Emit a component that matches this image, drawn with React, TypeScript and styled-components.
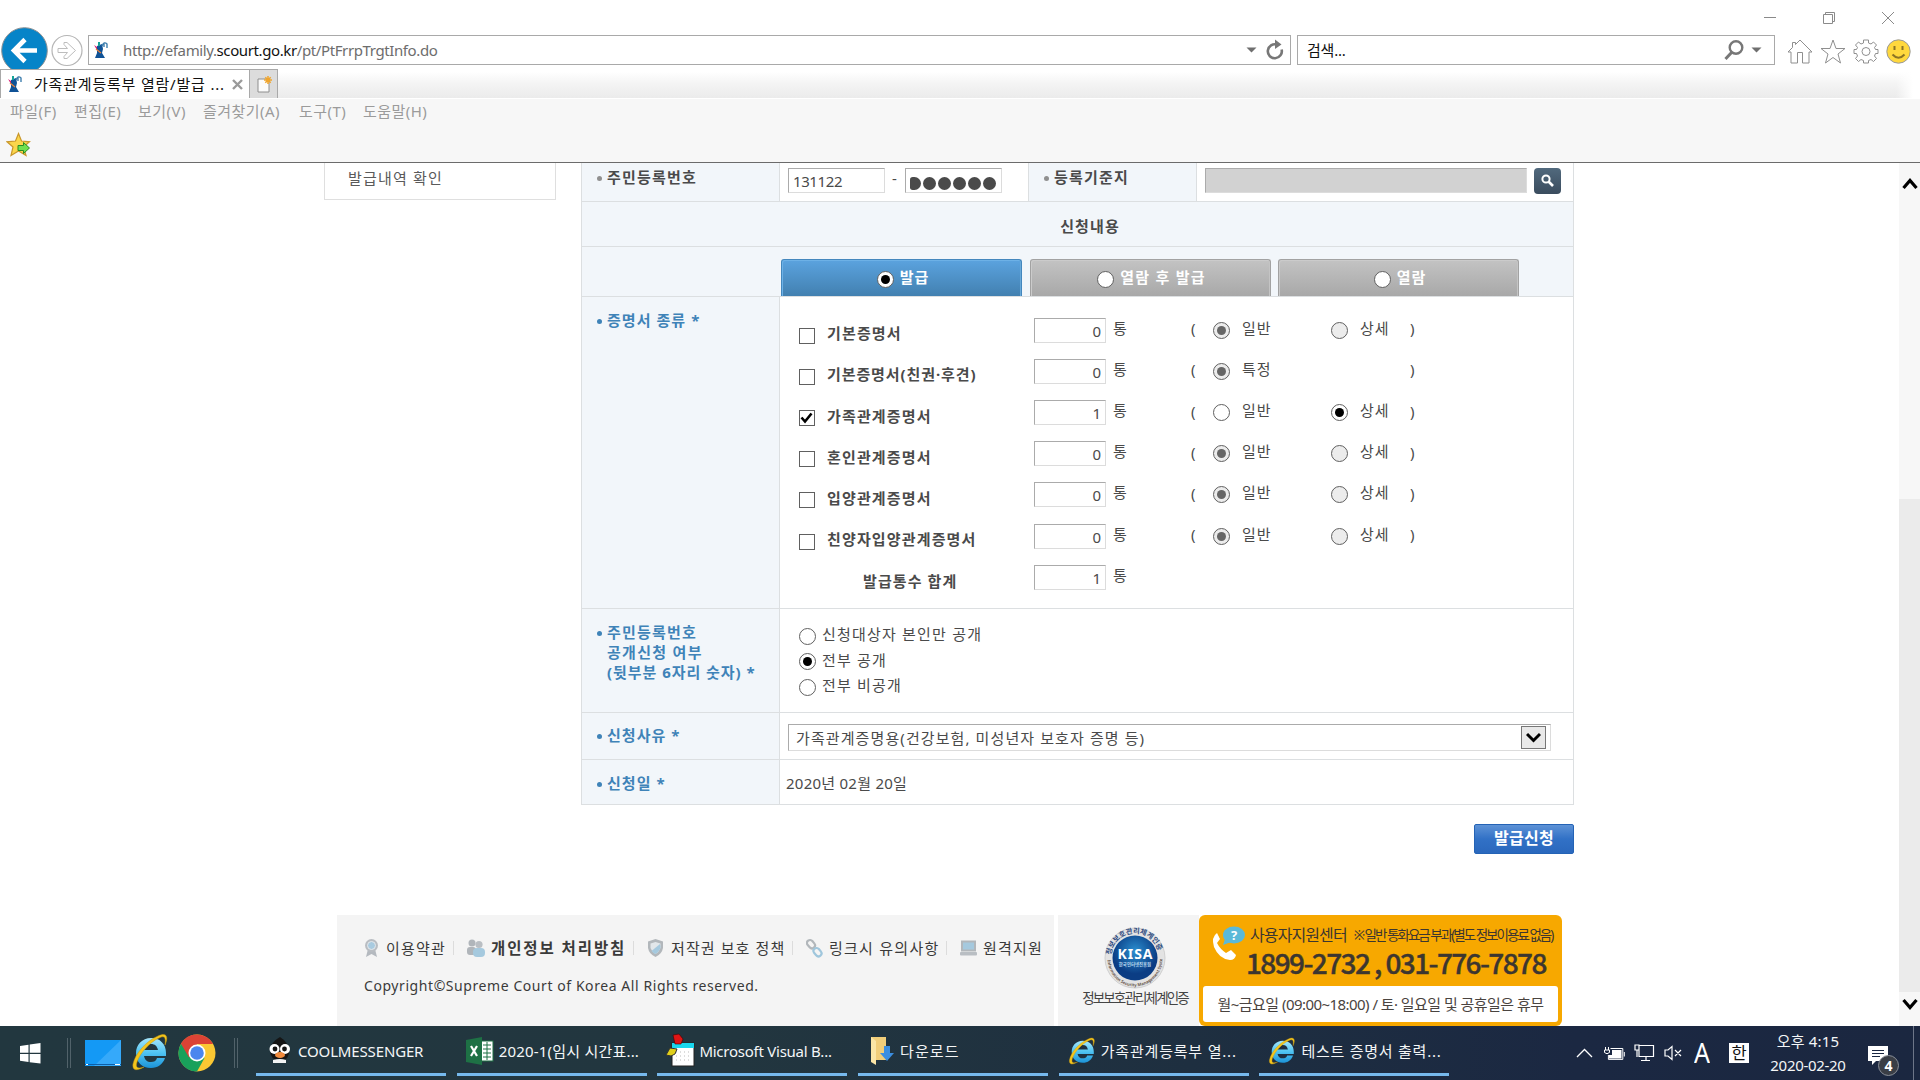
import React from "react";
import styled, { createGlobalStyle, css } from "styled-components";

const Global = createGlobalStyle`
  * { box-sizing: border-box; }
  html, body { margin: 0; padding: 0; }
  body {
    width: 1920px; height: 1080px; overflow: hidden; background: #fff;
    font-family: "Noto Sans", "Noto Sans CJK KR", sans-serif;
    font-size: 15px; color: #4a4a4a;
  }
  svg { display: block; flex: none; }
`;

const T = styled.span<{ $s?: number; $ls?: number; $c?: string; $b?: boolean; $ml?: number; $up?: number; $w?: number }>`
  display: block;
  flex: none;
  white-space: pre;
  line-height: 20px;
  font-size: ${(p) => p.$s ?? 15}px;
  letter-spacing: ${(p) => p.$ls ?? 0}px;
  color: ${(p) => p.$c ?? "inherit"};
  font-weight: ${(p) => (p.$b ? 700 : 400)};
  margin-left: ${(p) => p.$ml ?? 0}px;
  margin-bottom: ${(p) => p.$up ?? 0}px;
  ${(p) => p.$w && css`width: ${p.$w}px;`}
`;

const Screen = styled.div`
  width: 1920px; height: 1080px; display: flex; flex-direction: column; overflow: hidden;
`;

/* ---------- browser chrome ---------- */
const TitleBar = styled.div`
  height: 27px; flex: none; display: flex; justify-content: flex-end; padding: 11px 25px 0 0; gap: 45px;
`;
const NavBar = styled.div`
  height: 42px; flex: none; display: flex; align-items: flex-start; padding-left: 1px;
`;
const NavButton = styled.div<{ $ml?: number; $mt?: number }>`
  margin-left: ${(p) => p.$ml ?? 0}px; margin-top: ${(p) => p.$mt ?? 0}px; flex: none;
`;
const Field = styled.div<{ $w: number; $ml: number }>`
  width: ${(p) => p.$w}px; margin-left: ${(p) => p.$ml}px; margin-top: 8px; height: 30px; flex: none;
  border: 1px solid #a9a9a9; background: #fff; display: flex; align-items: center;
`;
const Grow = styled.div`flex: 1;`;
const UrlHost = styled.b`font-weight: 400; color: #111;`;
const ToolIcons = styled.div`display: flex; gap: 7px; margin: 12px 0 0 12px;`;
const TabStrip = styled.div`
  height: 30px; flex: none; display: flex; position: relative;
  background: linear-gradient(#fff 10%, #f4f4f4 50%, #ebebeb); border-bottom: 1px solid #fff;
`;
const StripFade = styled.div`
  margin-left: auto; width: 24px; background: linear-gradient(90deg, rgba(255,255,255,0), #fff 70%);
`;
const Tab = styled.div`
  width: 250px; height: 29px; background: #fff; border: 1px solid #a9a9a9; border-bottom: 0;
  display: flex; align-items: center; padding-left: 6px;
`;
const NewTab = styled.div`
  width: 28px; height: 29px; background: #dcdcdc; border: 1px solid #a9a9a9; border-left: 0; border-bottom: 0;
  padding: 5px 0 0 6px;
`;
const MenuArea = styled.div`height: 64px; flex: none; background: #f7f7f7; border-bottom: 1px solid #6b6b6b;`;
const MenuRow = styled.div`height: 27px; display: flex; align-items: center; padding: 0 0 3px 10px; color: #9b9b9b;`;
const FavRow = styled.div`padding: 6px 0 0 6px;`;

/* ---------- page ---------- */
const Viewport = styled.div`height: 863px; flex: none; display: flex; overflow: hidden;`;
const Page = styled.div`width: 1899px; flex: none; display: flex; flex-direction: column;`;
const Body = styled.div`display: flex; align-items: flex-start; height: 752px; flex: none; padding-left: 324px;`;
const SideItem = styled.div`
  width: 232px; height: 37px; border: 1px solid #dfdfdf; border-top: 0; display: flex; align-items: center; padding: 0 0 6px 23px; color: #5a5a5a;
`;
const Main = styled.div`width: 993px; margin-left: 25px;`;
const Table = styled.div`border: 1px solid #dcdfe1; border-top: 0;`;
const Row = styled.div<{ $h: number; $last?: boolean }>`
  display: flex; height: ${(p) => p.$h}px; ${(p) => !p.$last && css`border-bottom: 1px solid #dcdfe1;`}
`;
const HeadCell = styled.div<{ $w: number; $pt?: number; $blue?: boolean }>`
  width: ${(p) => p.$w}px; flex: none; background: #f2f6fa; border-right: 1px solid #dcdfe1;
  padding: ${(p) => p.$pt ?? 0}px 0 0 15px; display: flex; align-items: flex-start;
  color: ${(p) => (p.$blue ? "#3f83b8" : "#4a4a4a")};
`;
const Bullet = styled.i<{ $c: string }>`
  width: 5px; height: 5px; border-radius: 50%; background: ${(p) => p.$c}; margin: 9px 5px 0 0; flex: none;
`;
const Cell = styled.div<{ $w?: number }>`
  ${(p) => (p.$w ? css`width: ${p.$w}px; border-right: 1px solid #dcdfe1;` : css`flex: 1;`)}
  display: flex; align-items: flex-start; padding: 5px 0 0 8px; background: #fff;
`;
const Input = styled.div<{ $w: number; $bg?: string; $right?: boolean }>`
  width: ${(p) => p.$w}px; height: 25px; flex: none; background: ${(p) => p.$bg ?? "#fff"};
  border: 1px solid #ababab; border-right-color: #dcdcdc; border-bottom-color: #dcdcdc;
  display: flex; align-items: center; overflow: hidden; padding: 1px 4px 0;
  justify-content: ${(p) => (p.$right ? "flex-end" : "flex-start")};
`;
const Dots = styled.div`display: flex; gap: 2px; width: 88px; padding-top: 4px; overflow: hidden;`;
const Dot = styled.i`
  width: 13px; height: 13px; border-radius: 50%; background: #4a4a4a; flex: none;
  &:first-child { width: 11px; border-radius: 3px 7px 7px 3px; }
`;
const SearchBtn = styled.div`
  width: 27px; height: 26px; margin-left: 7px; border-radius: 4px; background: linear-gradient(#51697d, #3a4c5e);
  padding: 6px 0 0 7px;
`;
const Banner = styled.div`flex: 1; background: #f2f6fa; display: flex; justify-content: center; padding: 14px 0 0 25px;`;
const TabCell = styled.div`flex: 1; background: #f2f6fa; padding: 12px 0 0 199px; display: flex; gap: 7.5px;`;
const KindTab = styled.div<{ $on?: boolean }>`
  width: 241px; height: 37px; border-radius: 3px 3px 0 0; color: #fff;
  display: flex; justify-content: center; align-items: center; padding: 0 0 2px 3px;
  border: 1px solid ${(p) => (p.$on ? "#4487bd" : "#a2a2a2")}; border-bottom: 0;
  box-shadow: inset 1px 1px 0 ${(p) => (p.$on ? "#6db1e6" : "#cbcbcb")}, inset -1px 0 0 ${(p) => (p.$on ? "#6aa9d8" : "#c4c4c4")};
  background: ${(p) => (p.$on ? "linear-gradient(#5ba3df, #4280b0)" : "linear-gradient(#c3c3c3, #a8a8a8)")};
`;
const RadioRing = styled.i<{ $off?: boolean; $mt?: number }>`
  width: 17px; height: 17px; flex: none; border-radius: 50%; border: 1.3px solid #606060; background: ${(p) => (p.$off ? "#ececec" : "#fff")};
  display: flex; align-items: center; justify-content: center; margin-top: ${(p) => p.$mt ?? 0}px;
`;
const RadioDot = styled.i<{ $off?: boolean }>`
  width: 9px; height: 9px; border-radius: 50%; background: ${(p) => (p.$off ? "#666" : "#000")};
`;
const Check = styled.i`
  width: 16px; height: 16px; flex: none; border: 1.4px solid #606060; background: #fff; margin-top: 11px;
`;
const Certs = styled.div`flex: 1; padding: 12.6px 0 0 19px; display: flex; flex-direction: column;`;
const CertRow = styled.div`
  height: 41.2px; flex: none; display: grid; align-items: center;
  grid-template-columns: 27px 208px 72px 85px 22px 29px 89px 29px 50px 20px;
`;
const UpText = styled.div<{ $pl?: number; $pt?: number; $pb?: number }>`
  padding: ${(p) => p.$pt ?? 0}px 0 ${(p) => p.$pb ?? 5}px ${(p) => p.$pl ?? 0}px;
`;
const Options = styled.div`flex: 1; padding: 12.5px 0 0 19px;`;
const OptionRow = styled.div`height: 25.5px; display: flex; align-items: center; gap: 6px;`;
const Select = styled.div`
  width: 763px; height: 27px; margin-top: 6px; border: 1px solid #ababab; border-right-color: #dcdcdc; border-bottom-color: #dcdcdc;
  display: flex; align-items: center; justify-content: space-between; padding: 0 4px 0 7px;
`;
const SelectBtn = styled.div`
  width: 25px; height: 23px; border: 1.5px solid #777; background: #e9e9e9; padding: 5px 0 0 4px;
`;
const Submit = styled.div`
  width: 100px; height: 30px; margin: 19px 0 0 auto; border: 1px solid #2463b5; border-radius: 2px; color: #fff;
  background: linear-gradient(#5d92d6, #3171c6 50%, #2a68bd); display: flex; align-items: center; justify-content: center;
`;
const Footer = styled.div`height: 111px; flex: none; display: flex; padding-left: 337px;`;
const FootLinks = styled.div`width: 717px; background: #f4f4f4; padding: 23px 0 0 27px; color: #3a3a3a;`;
const LinkRow = styled.div`display: flex; align-items: center; height: 20px;`;
const LinkItem = styled.div<{ $w: number }>`
  width: ${(p) => p.$w}px; height: 20px; display: flex; align-items: center; flex: none;
`;
const LinkLabel = styled.div<{ $w: number; $ml: number }>`
  width: ${(p) => p.$w}px; margin-left: ${(p) => p.$ml}px; flex: none;
`;
const Sep = styled.i`width: 1px; height: 14px; background: #dcdcdc; flex: none;`;
const Copy = styled.div`margin-top: 17.5px;`;
const Kisa = styled.div`
  width: 141px; margin-left: 4px; background: #f4f4f4; display: flex; flex-direction: column; align-items: center; padding: 10px 0 0 13px;
`;
const KisaName = styled.div`margin-top: -3px;`;
const Call = styled.div`
  width: 363px; height: 111px; background: #f7a800; border-radius: 6px; padding: 10px 4px 4px; display: flex; flex-direction: column;
`;
const CallTop = styled.div`display: flex; height: 61px; flex: none;`;
const CallText = styled.div`padding-left: 3px; color: #3c3630;`;
const CallLine = styled.div`display: flex; height: 19px;`;
const PhoneLine = styled.div`
  margin-left: -4px;
  font-family: "Noto Sans CJK KR", sans-serif; font-size: 28px; line-height: 36px; font-weight: 500;
  letter-spacing: -1.6px; white-space: pre; -webkit-text-stroke: 0.4px #3c3630;
`;
const Hours = styled.div`
  height: 36px; background: #fff; border-radius: 3px; display: flex; align-items: center; justify-content: center; color: #4a4440; padding-bottom: 1px;
`;
const Scroll = styled.div`
  width: 21px; background: #f7f7f7; display: flex; flex-direction: column; align-items: center; padding-top: 14px;
`;
const Thumb = styled.div`width: 21px; height: 493px; flex: none; background: #ebebeb; margin: 309px 0 6px;`;

/* ---------- taskbar ---------- */
const Taskbar = styled.div`
  height: 54px; flex: none; display: flex; align-items: stretch; color: #f4f6f7;
  background: linear-gradient(90deg, #22373f 0, #22363f 38%, #1e2f40 62%, #1b2842 82%, #1b2740);
`;
const Slot = styled.div<{ $w: number; $pl?: number; $pt?: number }>`
  width: ${(p) => p.$w}px; padding: ${(p) => p.$pt ?? 0}px 0 0 ${(p) => p.$pl ?? 0}px; flex: none;
`;
const Divider = styled.i`
  width: 4px; height: 30px; margin-top: 12px; border: solid #51626a; border-width: 0 1px; flex: none;
`;
const Apps = styled.div`display: flex; gap: 10.7px; margin-left: 18px; width: 1194px; flex: none;`;
const TaskButton = styled.div<{ $pl: number }>`
  width: 190px; height: 50px; flex: none; border-bottom: 3px solid #76b9ed; display: flex; align-items: center; padding-left: ${(p) => p.$pl}px; padding-top: 3px;
`;
const Tray = styled.div`display: flex; align-items: center; margin-left: 126px;`;
const Clock = styled.div`width: 78px; margin-left: 20px; display: flex; flex-direction: column; align-items: center; gap: 4px;`;
const LangMark = styled.div`
  margin: -2px 0 0 11px; width: 17px; font-size: 25px; line-height: 30px; color: #fff; transform: scaleY(1.08);
`;
const Han = styled.div`
  width: 20px; height: 20px; margin-left: 18px; background: #fff; display: flex; align-items: center; justify-content: center;
`;
const Notif = styled.div`margin-left: 21px; margin-top: 6px; position: relative;`;
const Badge = styled.div`
  position: absolute; left: 10px; top: 9px; width: 21px; height: 21px; border-radius: 50%; background: #3a3e46; border: 1px solid #8a8f98;
  display: flex; align-items: center; justify-content: center;
`;
const PeekLine = styled.i`width: 1px; height: 54px; background: #6d7688; margin-left: 24px;`;

const CourtIcon = () => (
  <svg width="15" height="18" viewBox="0 0 15 18">
    <path d="M4 5 L9 3 L10 8 L9 12 L12 17 H2 L4 12 Z" fill="#0f5296" />
    <path d="M9 5 Q11 0 14 3 V7 M11 2 V6" stroke="#3f7fae" strokeWidth="1.4" fill="none" />
    <path d="M1 4 l3 2 l0 3 Z" fill="#d81b72" />
    <path d="M5 1 h2 v4 h-2 Z" fill="#17a398" />
    <path d="M3 8 L8 12" stroke="#e8803a" strokeWidth="1.3" />
  </svg>
);

const IeIcon = ({ size }: { size: number }) => (
  <svg width={size} height={size} viewBox="0 0 38 38">
    <defs>
      <linearGradient id="ieb" x1="0" y1="0" x2="0" y2="1">
        <stop offset="0" stopColor="#a5e6fb" /><stop offset=".5" stopColor="#4fc3f2" /><stop offset="1" stopColor="#1c93d8" />
      </linearGradient>
    </defs>
    <path d="M20 5 C11 5 5 12 5 20 C5 29 11 35 20 35 C27 35 32 31 34 25 H26 C25 28 23 29 20 29 C16 29 14 27 13 23 H35 V20 C35 11 29 5 20 5 Z M13 17 C14 13 16 11 20 11 C24 11 26 13 27 17 Z" fill="url(#ieb)" fillRule="evenodd" />
    <path d="M34 12 C38 3 35 -1 27 3 C15 8 4 21 2 31 C1 38 6 38 13 34 C7 36 4 35 6 29 C9 20 19 9 28 5 C34 2 35 5 34 12 Z" fill="#f4c51c" stroke="#c99a10" strokeWidth=".5" />
  </svg>
);

const Chevron = ({ d }: { d: string }) => (
  <svg width="16" height="13" viewBox="0 0 16 13"><path d={d} fill="none" stroke="#000" strokeWidth="3.2" /></svg>
);

const Radio = ({ on, off, mt }: { on?: boolean; off?: boolean; mt?: number }) => (
  <RadioRing $off={off} $mt={mt}>{on && <RadioDot $off={off} />}</RadioRing>
);

const certs: { name: string; n: number; on?: boolean; a: string; b?: string; ls?: number }[] = [
  { name: "기본증명서", n: 0, a: "일반", b: "상세" },
  { name: "기본증명서(친권·후견)", n: 0, a: "특정", ls: 0.9 },
  { name: "가족관계증명서", n: 1, on: true, a: "일반", b: "상세" },
  { name: "혼인관계증명서", n: 0, a: "일반", b: "상세" },
  { name: "입양관계증명서", n: 0, a: "일반", b: "상세" },
  { name: "친양자입양관계증명서", n: 0, a: "일반", b: "상세" },
];

const menus: [string, number][] = [["파일(F)", 64], ["편집(E)", 64], ["보기(V)", 65], ["즐겨찾기(A)", 96], ["도구(T)", 64], ["도움말(H)", 70]];

const Chrome = () => (
  <>
    <TitleBar>
      <svg width="14" height="14" viewBox="0 0 14 14"><path d="M1 6.5 H13" stroke="#8a8a8a" /></svg>
      <svg width="14" height="14" viewBox="0 0 14 14"><path d="M1.5 3.5 h9 v9 h-9 Z M3.5 3.5 v-2 h9 v9 h-2" fill="none" stroke="#8a8a8a" /></svg>
      <svg width="14" height="14" viewBox="0 0 14 14"><path d="M1 1 L13 13 M13 1 L1 13" stroke="#8a8a8a" /></svg>
    </TitleBar>
    <NavBar>
      <NavButton>
        <svg width="47" height="42" viewBox="0 0 47 42">
          <circle cx="23.5" cy="23.5" r="22.8" fill="#0684c8" stroke="#8a8f93" strokeWidth="1" />
          <path d="M36 23.5 H14 M24 12.5 L13 23.5 L24 34.5" stroke="#fff" strokeWidth="4.6" fill="none" />
        </svg>
      </NavButton>
      <NavButton $ml={3} $mt={7}>
        <svg width="32" height="33" viewBox="0 0 32 33">
          <circle cx="16" cy="16.5" r="15" fill="#fff" stroke="#b5b5b5" strokeWidth="1.2" />
          <path d="M7 14.5 H16.5 L13 10.5 V8.5 H16 L24.5 16.5 L16 24.5 H13 V22.5 L16.5 18.5 H7 Z" fill="none" stroke="#bdbdbd" />
        </svg>
      </NavButton>
      <Field $w={1203} $ml={5}>
        <NavButton $ml={4}><CourtIcon /></NavButton>
        <T $ml={15} $ls={-0.39} $c="#6d6d6d" $up={1}>http://efamily.<UrlHost>scourt.go.kr</UrlHost>/pt/PtFrrpTrgtInfo.do</T>
        <Grow />
        <svg width="11" height="6" viewBox="0 0 11 6"><path d="M.5 .5 H10.5 L5.5 5.5 Z" fill="#6f6f6f" /></svg>
        <NavButton $ml={9}>
          <svg width="19" height="22" viewBox="0 0 19 22">
            <path d="M11 5.6 A7 7 0 1 0 15.6 10.5" fill="none" stroke="#777" strokeWidth="2.6" />
            <path d="M9 0.5 L15.5 5.5 L9 10 Z" fill="#777" />
          </svg>
        </NavButton>
        <NavButton $ml={5} />
      </Field>
      <Field $w={478} $ml={6}>
        <T $ml={9} $c="#111" $ls={-0.2} $up={1}>검색...</T>
        <Grow />
        <svg width="22" height="22" viewBox="0 0 22 22">
          <circle cx="13" cy="8.5" r="6.3" fill="none" stroke="#777" strokeWidth="2.4" />
          <path d="M9 13 L2.5 20" stroke="#777" strokeWidth="3" />
        </svg>
        <NavButton $ml={6}><svg width="11" height="6" viewBox="0 0 11 6"><path d="M.5 .5 H10.5 L5.5 5.5 Z" fill="#6f6f6f" /></svg></NavButton>
        <NavButton $ml={12} />
      </Field>
      <ToolIcons>
        <svg width="26" height="25" viewBox="0 0 26 25"><path d="M1 13 L5.5 8.5 V3.5 H8.5 V5.5 L13 1 L25 13 H22 V24 H15.5 V13.5 H10.5 V24 H4 V13 Z" fill="#fff" stroke="#8f8f8f" /></svg>
        <svg width="26" height="25" viewBox="0 0 26 25"><path d="M13 1 L16 9.5 H25 L18 15 L20.5 24 L13 18.5 L5.5 24 L8 15 L1 9.5 H10 Z" fill="#fff" stroke="#8f8f8f" /></svg>
        <svg width="26" height="25" viewBox="0 0 26 25">
          <path d="M10.5 1 H15.5 V4 L18 5 L20.5 3 L23.5 6 L21.5 8.5 L22.5 10.5 H25 V14.5 H22.5 L21.5 17 L23.5 19.5 L20.5 22.5 L18 20.5 L15.5 21.5 V24 H10.5 V21.5 L8 20.5 L5.5 22.5 L2.5 19.5 L4.5 17 L3.5 14.5 H1 V10.5 H3.5 L4.5 8.5 L2.5 6 L5.5 3 L8 5 L10.5 4 Z" fill="#fff" stroke="#8f8f8f" />
          <circle cx="13" cy="12.5" r="4" fill="none" stroke="#8f8f8f" />
        </svg>
        <svg width="25" height="25" viewBox="0 0 25 25">
          <circle cx="12.5" cy="12.5" r="11.7" fill="#ffd83d" stroke="#999" strokeWidth="1" />
          <path d="M8.5 7 V11 M16.5 7 V11" stroke="#8c7425" strokeWidth="2" />
          <path d="M6.5 15.5 Q12.5 22 18.5 15.5" fill="none" stroke="#8c7425" strokeWidth="2" />
        </svg>
      </ToolIcons>
    </NavBar>
    <TabStrip>
      <Tab>
        <CourtIcon />
        <T $ml={12} $c="#111" $ls={0.8}>가족관계등록부 열람/발급 ...</T>
        <Grow />
        <svg width="11" height="11" viewBox="0 0 11 11"><path d="M1 1 L10 10 M10 1 L1 10" stroke="#9a9a9a" strokeWidth="2.4" /></svg>
        <NavButton $ml={6} />
      </Tab>
      <NewTab>
        <svg width="18" height="18" viewBox="0 0 18 18">
          <path d="M2 4 H13 V17 H2 Z" fill="#fbfbfb" stroke="#8e8e8e" />
          <path d="M12 1 V9 M8 5 H16 M9.3 2.3 L14.7 7.7 M14.7 2.3 L9.3 7.7" stroke="#f0a52c" strokeWidth="1.5" />
        </svg>
      </NewTab>
      <StripFade />
    </TabStrip>
    <MenuArea>
      <MenuRow>{menus.map(([m, w]) => <T key={m} $w={w} $ls={0.45}>{m}</T>)}</MenuRow>
      <FavRow>
        <svg width="26" height="26" viewBox="0 0 26 26">
          <path d="M12.5 1.5 L15.5 9 L23.5 9.8 L17.5 15 L20 23.5 L12.5 19 L5 23.5 L7 15 L1 9.8 L9.5 9 Z" fill="#fbd64b" stroke="#c9972b" strokeWidth="1.2" />
          <path d="M12 13.5 H17.5 V10.5 L23.5 16 L17.5 21.5 V18.5 H12 Z" fill="#6fe04f" stroke="#2a8c22" />
        </svg>
      </FavRow>
    </MenuArea>
  </>
);

const Application = () => (
  <Main>
    <Table>
      <Row $h={39}>
        <HeadCell $w={198} $pt={4}><Bullet $c="#909090" /><T $b $ls={1.2}>주민등록번호</T></HeadCell>
        <Cell $w={249}>
          <Input $w={97}><T $ls={-0.4}>131122</T></Input>
          <T $ml={7} $w={13}>-</T>
          <Input $w={97}><Dots>{[0, 1, 2, 3, 4, 5].map((i) => <Dot key={i} />)}</Dots></Input>
        </Cell>
        <HeadCell $w={168} $pt={4}><Bullet $c="#909090" /><T $b $ls={1.2}>등록기준지</T></HeadCell>
        <Cell>
          <Input $w={322} $bg="#d2d2d2" />
          <SearchBtn>
            <svg width="14" height="14" viewBox="0 0 14 14"><circle cx="5" cy="5" r="3.6" fill="none" stroke="#fff" strokeWidth="2" /><path d="M7.5 7.5 L12 12" stroke="#fff" strokeWidth="2.6" /></svg>
          </SearchBtn>
        </Cell>
      </Row>
      <Row $h={45}><Banner><T $b $ls={1.1}>신청내용</T></Banner></Row>
      <Row $h={50}>
        <TabCell>
          <KindTab $on><Radio on mt={5} /><T $ml={6} $b $ls={1}>발급</T></KindTab>
          <KindTab><Radio mt={5} /><T $ml={6} $b $ls={1.25}>열람 후 발급</T></KindTab>
          <KindTab><Radio mt={5} /><T $ml={6} $b $ls={1}>열람</T></KindTab>
        </TabCell>
      </Row>
      <Row $h={312}>
        <HeadCell $w={198} $pt={12.5} $blue><Bullet $c="#3f83b8" /><T $b $ls={1.05}>증명서 종류 *</T></HeadCell>
        <Certs>
          {certs.map((c) => (
            <CertRow key={c.name}>
              {c.on ? (
                <Check><svg width="13" height="13" viewBox="0 0 13 13"><path d="M1.5 6.5 L5 10.5 L11.5 2.5" fill="none" stroke="#000" strokeWidth="2.6" /></svg></Check>
              ) : <Check />}
              <UpText $pl={1} $pt={6} $pb={0}><T $b $ls={c.ls ?? 1.15}>{c.name}</T></UpText>
              <Input $w={72} $right><T>{c.n}</T></Input>
              <UpText $pl={7}><T>통</T></UpText>
              <UpText $pb={4}><T>(</T></UpText>
              <Radio on={!c.on} off={!c.on} />
              <UpText><T $ls={1}>{c.a}</T></UpText>
              {c.b ? <Radio on={c.on} off={!c.on} /> : <i />}
              <UpText><T $ls={1}>{c.b ?? ""}</T></UpText>
              <UpText $pb={4}><T>)</T></UpText>
            </CertRow>
          ))}
          <CertRow>
            <i />
            <UpText $pl={37} $pt={8} $pb={0}><T $b $ls={1.1}>발급통수 합계</T></UpText>
            <Input $w={72} $right><T>1</T></Input>
            <UpText $pl={7}><T>통</T></UpText>
          </CertRow>
        </Certs>
      </Row>
      <Row $h={104}>
        <HeadCell $w={198} $pt={12.5} $blue>
          <Bullet $c="#3f83b8" />
          <div>
            <T $b $ls={1.2}>주민등록번호</T>
            <T $b $ls={1.3}>공개신청 여부</T>
            <T $b $ls={0.95}>(뒷부분 6자리 숫자) *</T>
          </div>
        </HeadCell>
        <Options>
          <OptionRow><Radio mt={4} /><T $ls={1.2}>신청대상자 본인만 공개</T></OptionRow>
          <OptionRow><Radio on mt={4} /><T $ls={1.2}>전부 공개</T></OptionRow>
          <OptionRow><Radio mt={4} /><T $ls={1.2}>전부 비공개</T></OptionRow>
        </Options>
      </Row>
      <Row $h={47}>
        <HeadCell $w={198} $pt={12} $blue><Bullet $c="#3f83b8" /><T $b $ls={1.05}>신청사유 *</T></HeadCell>
        <Cell>
          <Select>
            <T $ls={1.1}>가족관계증명용(건강보험, 미성년자 보호자 증명 등)</T>
            <SelectBtn><svg width="15" height="12" viewBox="0 0 15 12"><path d="M1 2 L7.5 8.5 L14 2" fill="none" stroke="#000" strokeWidth="3" /></svg></SelectBtn>
          </Select>
        </Cell>
      </Row>
      <Row $h={44} $last>
        <HeadCell $w={198} $pt={12.5} $blue><Bullet $c="#3f83b8" /><T $b $ls={1.05}>신청일 *</T></HeadCell>
        <Options><T $ls={0.25} $ml={-13}>2020년 02월 20일</T></Options>
      </Row>
    </Table>
    <Submit><T $b $s={16} $ls={0.3} $up={2}>발급신청</T></Submit>
  </Main>
);

const PageFooter = () => (
  <Footer>
    <FootLinks>
      <LinkRow>
        <LinkItem $w={102}>
          <svg width="15" height="20" viewBox="0 0 15 20"><path d="M4 11 L2 19 L7.5 16 L13 19 L11 11 Z" fill="#b4b9bf" /><circle cx="7.5" cy="7.5" r="6.5" fill="#b9bdc2" /><circle cx="7.5" cy="7.5" r="4" fill="#a9cbe0" stroke="#e6e9ec" /></svg>
          <LinkLabel $ml={7} $w={67}><T $s={15} $ls={1.2}>이용약관</T></LinkLabel><Sep />
        </LinkItem>
        <LinkItem $w={181}>
          <svg width="19" height="20" viewBox="0 0 19 20"><circle cx="6" cy="5" r="3.5" fill="#b0b5ba" /><rect x="1" y="9" width="9" height="8" rx="3" fill="#b0b5ba" /><circle cx="13" cy="6.5" r="3.6" fill="#b9bec3" /><rect x="7" y="10" width="12" height="9" rx="4" fill="#a5c9de" /></svg>
          <LinkLabel $ml={6} $w={142}><T $s={15.5} $b $ls={1.9}>개인정보 처리방침</T></LinkLabel><Sep />
        </LinkItem>
        <LinkItem $w={159}>
          <svg width="17" height="20" viewBox="0 0 17 20"><path d="M8.5 1 L16 3.5 V10 Q15 16 8.5 19 Q2 16 1 10 V3.5 Z" fill="#b2b7bb" /><path d="M8.5 4 L13.5 5.5 V10 Q12 14 8.5 16 Q5 14 3.5 10 V5.5 Z" fill="#e2e7ea" /><path d="M13 6 L4.5 13 Q6.5 15.5 8.5 16 Q13 13 13.5 9 Z" fill="#a5c9de" /></svg>
          <LinkLabel $ml={7} $w={121}><T $s={15} $ls={1.1}>저작권 보호 정책</T></LinkLabel><Sep />
        </LinkItem>
        <LinkItem $w={154}>
          <svg width="17" height="20" viewBox="0 0 17 20"><rect x="-4" y="-2.6" width="9" height="6" rx="3" transform="translate(5 5.5) rotate(50)" fill="none" stroke="#b2b7bb" strokeWidth="2.2" /><rect x="-4" y="-2.6" width="9" height="6" rx="3" transform="translate(11.5 13.5) rotate(50)" fill="none" stroke="#9fc6dc" strokeWidth="2.2" /></svg>
          <LinkLabel $ml={6} $w={117}><T $s={15} $ls={1.25}>링크시 유의사항</T></LinkLabel><Sep />
        </LinkItem>
        <LinkItem $w={90}>
          <svg width="17" height="16" viewBox="0 0 17 16"><rect x="1" y=".5" width="15" height="11" fill="#b2b7bb" /><rect x="3" y="2.5" width="11" height="7" fill="#a5c9de" /><rect x="0" y="12" width="17" height="3.5" rx="1" fill="#b9bec3" /></svg>
          <T $ml={6} $s={15} $ls={1.2}>원격지원</T>
        </LinkItem>
      </LinkRow>
      <Copy><T $s={14} $ls={0.57}>Copyright©Supreme Court of Korea All Rights reserved.</T></Copy>
    </FootLinks>
    <Kisa>
      <svg width="62" height="66" viewBox="0 0 62 66">
        <defs>
          <radialGradient id="kg" cx=".5" cy=".35"><stop offset="0" stopColor="#2b8fd0" /><stop offset="1" stopColor="#0b3d84" /></radialGradient>
          <path id="arcTop" d="M8.2 39 A23.8 23.8 0 1 1 53.8 39" />
          <path id="arcBot" d="M3.6 34 A27.4 27.4 0 0 0 58.4 34" />
        </defs>
        <circle cx="31" cy="33" r="30" fill="#e3e3e3" stroke="#d0d0d0" />
        <circle cx="31" cy="33" r="22.5" fill="url(#kg)" />
        <text fontSize="7.2" fontWeight="700" fill="#2c4a80" fontFamily="Noto Sans CJK KR"><textPath href="#arcTop" startOffset="9">정보보호관리체계인증</textPath></text>
        <text fontSize="4.2" fontWeight="700" fill="#6b5a50" fontFamily="Noto Sans"><textPath href="#arcBot" startOffset="1">Information Security Management System</textPath></text>
        <text x="31" y="34" textAnchor="middle" fontSize="14" fontWeight="700" fill="#fff" fontFamily="Noto Sans" textLength="35">KISA</text>
        <text x="31" y="41" textAnchor="middle" fontSize="4.4" fontWeight="700" fill="#bcd9ef" fontFamily="Noto Sans CJK KR">한국인터넷진흥원</text>
      </svg>
      <KisaName><T $s={13.5} $ls={-1.85} $c="#444">정보보호관리체계인증</T></KisaName>
    </Kisa>
    <Call>
      <CallTop>
        <svg width="44" height="42" viewBox="0 0 44 42">
          <path d="M14 8 L17 14 L14 18 Q17 24 23 28 L28 25 L33 30 Q32 35 27 35 Q16 34 11 22 Q8 12 14 8 Z" fill="#fff" />
          <ellipse cx="31" cy="10" rx="11" ry="8.5" fill="#5bb9d8" /><path d="M22 14 L20 20 L28 17 Z" fill="#5bb9d8" />
          <text x="31" y="15" textAnchor="middle" fontSize="13" fontWeight="700" fill="#fff" fontFamily="Noto Sans">?</text>
        </svg>
        <CallText>
          <CallLine>
            <T $s={16} $ls={-0.9}>사용자지원센터</T>
            <T $s={13.5} $ls={-1.98} $ml={7}>※ 일반 통화요금 부과(별도 정보이용료 없음)</T>
          </CallLine>
          <PhoneLine>1899-2732 , 031-776-7878</PhoneLine>
        </CallText>
      </CallTop>
      <Hours><T $s={15} $ls={-0.55}>월~금요일 (09:00~18:00) / 토· 일요일 및 공휴일은 휴무</T></Hours>
    </Call>
  </Footer>
);

const TaskbarView = () => (
  <Taskbar>
    <Slot $w={67} $pl={20} $pt={17}>
      <svg width="21" height="21" viewBox="0 0 21 21"><path d="M0 3 L8.5 1.7 V9.8 H0 Z M9.7 1.5 L20.5 0 V9.8 H9.7 Z M0 11 H8.5 V19 L0 17.8 Z M9.7 11 H20.5 V20.6 L9.7 19.2 Z" fill="#fff" /></svg>
    </Slot>
    <Divider />
    <Slot $w={60} $pl={14} $pt={14}>
      <svg width="36" height="26" viewBox="0 0 36 26"><rect width="36" height="26" fill="#1499f5" /><path d="M36 0 V26 H9 Z" fill="#35a9fa" /><path d="M0 24.5 H36" stroke="#0d5fa8" /><path d="M1 24.5 H3 M30 24.5 H35" stroke="#fff" /></svg>
    </Slot>
    <Slot $w={46} $pt={7}><IeIcon size={38} /></Slot>
    <Slot $w={57} $pl={1} $pt={8}>
      <svg width="38" height="38" viewBox="0 0 38 38">
        <circle cx="19" cy="19" r="18.5" fill="#fbc833" />
        <path d="M3 9.7 A18.5 18.5 0 0 0 19 37.5 L26.5 24 L19 19 Z" fill="#19a15b" />
        <path d="M3 9.7 A18.5 18.5 0 0 1 35.1 10 H19 V19 L11 23.5 Z" fill="#dc4335" />
        <circle cx="19" cy="19" r="8.5" fill="#fff" /><circle cx="19" cy="19" r="6.8" fill="#4b86ee" />
      </svg>
    </Slot>
    <Divider />
    <Apps>
      <TaskButton $pl={12}>
        <svg width="24" height="30" viewBox="0 0 24 28"><path d="M12 0 Q20 5 21 13 Q22 23 12 24 Q2 23 2 13 Q3 5 12 0 Z" fill="#151515" /><circle cx="6.5" cy="12" r="5" fill="#fff" /><circle cx="17" cy="12" r="5" fill="#fff" /><circle cx="7" cy="12" r="2.4" fill="#151515" /><circle cx="16.5" cy="12" r="2.4" fill="#151515" /><path d="M5 23 Q12 21 18 23 V26 H5 Z" fill="#f3f3f3" /><ellipse cx="12" cy="18" rx="5" ry="3" fill="#f18a3c" /></svg>
        <T $ml={6} $ls={-0.15}>COOLMESSENGER</T>
      </TaskButton>
      <TaskButton $pl={9}>
        <svg width="28" height="28" viewBox="0 0 28 28"><rect x="14" y="4" width="13" height="20" fill="#fff" stroke="#1e7145" /><path d="M17 8 H25 M17 12 H25 M17 16 H25 M17 20 H25 M21 5 V23" stroke="#1e7145" /><path d="M0 3 L16 0 V28 L0 25 Z" fill="#1e7145" /><path d="M5 9 L11 19 M11 9 L5 19" stroke="#fff" strokeWidth="2.2" /></svg>
        <T $ml={5} $ls={0.2}>2020-1(임시 시간표...</T>
      </TaskButton>
      <TaskButton $pl={9}>
        <svg width="29" height="36" viewBox="0 0 29 34"><rect x="6" y="9" width="22" height="23" fill="#fff" stroke="#222" /><rect x="6" y="9" width="22" height="5" fill="#19d7ee" /><path d="M10 18 H26 M10 22 H26 M10 26 H26" stroke="#bbb" strokeDasharray="1 3" /><path d="M7 1 L13 0 L17 5 L15 10 L9 10 Z" fill="#e01515" stroke="#400" strokeWidth=".6" /><path d="M0 21 L4 14 L11 15 L9 20 L5 22 Z" fill="#e0cf1a" stroke="#333" /></svg>
        <T $ml={4} $ls={-0.25}>Microsoft Visual B...</T>
      </TaskButton>
      <TaskButton $pl={12}>
        <svg width="24" height="32" viewBox="0 0 24 30"><path d="M1 1 H16 V24 H1 Z" fill="#f1ce7a" /><path d="M1 1 L6 5 V29 L1 26 Z" fill="#fbe6a6" /><path d="M14 10 H20 V17 H24 L17 25 L10 17 H14 Z" fill="#3b8ee0" /></svg>
        <T $ml={6} $ls={1.1}>다운로드</T>
      </TaskButton>
      <TaskButton $pl={9}><IeIcon size={28} /><T $ml={5} $ls={0.8}>가족관계등록부 열...</T></TaskButton>
      <TaskButton $pl={9}><IeIcon size={28} /><T $ml={5} $ls={0.75}>테스트 증명서 출력...</T></TaskButton>
    </Apps>
    <Tray>
      <svg width="17" height="10" viewBox="0 0 17 10"><path d="M1 9 L8.5 1.5 L16 9" fill="none" stroke="#fff" strokeWidth="1.3" /></svg>
      <NavButton $ml={11}><svg width="21" height="14" viewBox="0 0 21 14"><path d="M8 4 H17.5 V12.5 H5 V9 H8 Z" fill="#fff" /><path d="M6.5 2.5 H18.8 V13.4 H4.4 V9 M20.3 6 V10.5 M.5 4 H5.5 V6.5 Q3 9 .5 6.5 Z M1.5 1 V4 M4.5 1 V4" stroke="#fff" strokeWidth="1" fill="none" /></svg></NavButton>
      <NavButton $ml={9}><svg width="21" height="18" viewBox="0 0 21 18"><path d="M5 1.5 H19.5 V12.5 H5 Z M12 12.5 V16.5 M7 16.5 H16 M1 1 H5 V6 H1 Z M3 6 V13" fill="none" stroke="#fff" strokeWidth="1.2" /></svg></NavButton>
      <NavButton $ml={9}><svg width="19" height="16" viewBox="0 0 19 16"><path d="M1 5 H4 L8 1.5 V14.5 L4 11 H1 Z M11 5 L17 11 M17 5 L11 11" fill="none" stroke="#fff" strokeWidth="1.2" /></svg></NavButton>
      <LangMark>A</LangMark>
      <Han><T $s={16.5} $c="#111" $up={1}>한</T></Han>
      <Clock><T $ls={0.15}>오후 4:15</T><T $ls={-0.3}>2020-02-20</T></Clock>
      <Notif>
        <svg width="21" height="20" viewBox="0 0 21 20"><path d="M0 0 H20 V15 H8 L4 19 V15 H0 Z" fill="#fff" /><path d="M4 4.5 H16 M4 7.5 H16 M4 10.5 H12" stroke="#1b2842" /></svg>
        <Badge><T $s={14} $b $c="#fff">4</T></Badge>
      </Notif>
      <PeekLine />
    </Tray>
  </Taskbar>
);

export default function App() {
  return (
    <Screen>
      <Global />
      <Chrome />
      <Viewport>
        <Page>
          <Body>
            <SideItem><T $ls={1.2}>발급내역 확인</T></SideItem>
            <Application />
          </Body>
          <PageFooter />
        </Page>
        <Scroll>
          <Chevron d="M1.5 11 L8 3.5 L14.5 11" />
          <Thumb />
          <Chevron d="M1.5 2 L8 9.5 L14.5 2" />
        </Scroll>
      </Viewport>
      <TaskbarView />
    </Screen>
  );
}
